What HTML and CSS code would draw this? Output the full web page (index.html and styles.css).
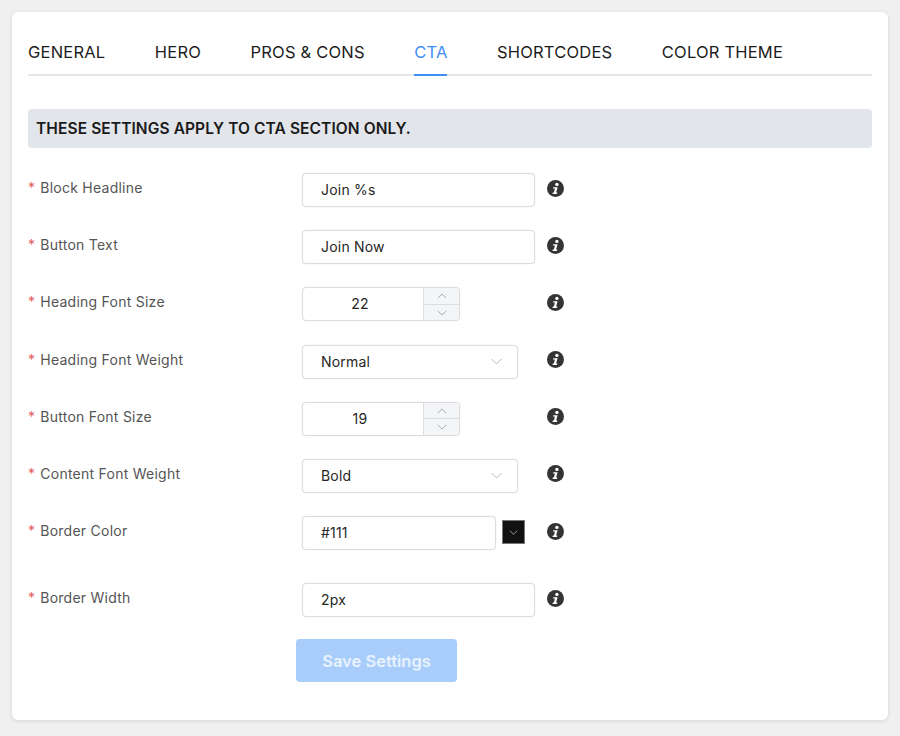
FILE: index.html
```html
<!DOCTYPE html>
<html>
<head>
  <title>CTA Settings</title>
  <meta charset="UTF-8">
  <link rel="stylesheet" href="styles.css">
</head>
<body>
  <svg class="defs" width="0" height="0">
    <symbol id="info" viewBox="0 0 17 17">
      <circle cx="8.5" cy="8.5" r="8.5" fill="#343434"/>
      <circle cx="9.9" cy="4.4" r="1.7" fill="#fff"/>
      <path d="M6.3 7.2h4.3l-1.5 5.4h1.2l-.3 1.4H5.5l.3-1.4h1.1l1-4h-1.9z" fill="#fff"/>
    </symbol>
    <symbol id="down" viewBox="0 0 12 7">
      <path d="M1 1l5 5 5-5" fill="none" stroke="currentColor" stroke-width="1"/>
    </symbol>
    <symbol id="up" viewBox="0 0 12 7">
      <path d="M1 6l5-5 5 5" fill="none" stroke="currentColor" stroke-width="1"/>
    </symbol>
  </svg>

  <div class="card">
    <div class="tabs">
      <a class="tab">General</a>
      <a class="tab">Hero</a>
      <a class="tab">Pros &amp; Cons</a>
      <a class="tab active">CTA</a>
      <a class="tab">Shortcodes</a>
      <a class="tab">Color Theme</a>
    </div>

    <div class="notice">These settings apply to CTA section only.</div>

    <div class="row">
      <label class="label">Block Headline</label>
      <div class="field wide">Join %s</div>
      <svg class="info"><use href="#info"/></svg>
    </div>

    <div class="row">
      <label class="label">Button Text</label>
      <div class="field wide">Join Now</div>
      <svg class="info"><use href="#info"/></svg>
    </div>

    <div class="row">
      <label class="label">Heading Font Size</label>
      <div class="number">
        <div class="number-value">22</div>
        <div class="stepper">
          <span><svg class="step-icon"><use href="#up"/></svg></span>
          <span><svg class="step-icon"><use href="#down"/></svg></span>
        </div>
      </div>
      <svg class="info"><use href="#info"/></svg>
    </div>

    <div class="row">
      <label class="label">Heading Font Weight</label>
      <div class="field select">Normal<svg class="select-icon"><use href="#down"/></svg></div>
      <svg class="info"><use href="#info"/></svg>
    </div>

    <div class="row">
      <label class="label">Button Font Size</label>
      <div class="number">
        <div class="number-value">19</div>
        <div class="stepper">
          <span><svg class="step-icon"><use href="#up"/></svg></span>
          <span><svg class="step-icon"><use href="#down"/></svg></span>
        </div>
      </div>
      <svg class="info"><use href="#info"/></svg>
    </div>

    <div class="row">
      <label class="label">Content Font Weight</label>
      <div class="field select">Bold<svg class="select-icon"><use href="#down"/></svg></div>
      <svg class="info"><use href="#info"/></svg>
    </div>

    <div class="row color-row">
      <label class="label">Border Color</label>
      <div class="field color">#111</div>
      <div class="swatch"><svg class="swatch-icon"><use href="#down"/></svg></div>
      <svg class="info"><use href="#info"/></svg>
    </div>

    <div class="row">
      <label class="label">Border Width</label>
      <div class="field wide">2px</div>
      <svg class="info"><use href="#info"/></svg>
    </div>

    <div class="actions">
      <button class="save">Save Settings</button>
    </div>
  </div>
</body>
</html>
```

FILE: styles.css
```css
html, body {
  height: 100%;
}
body {
  margin: 0;
  padding: 12px;
  box-sizing: border-box;
  height: 736px;
  overflow: hidden;
  background: #f0f0f0;
  color: #1b1b1b;
  font-family: Inter, "Noto Sans", sans-serif;
  font-size: 14px;
}
.defs {
  position: absolute;
}
.card {
  height: 708px;
  box-sizing: border-box;
  padding: 21px 16px 0;
  background: #fff;
  border-radius: 6px;
  box-shadow: 0 1px 4px rgba(0, 0, 0, 0.12);
}
.tabs {
  display: flex;
  gap: 49.5px;
  height: 41px;
  border-bottom: 2px solid #e4e7ec;
}
.tab {
  height: 41px;
  line-height: 39px;
  font-size: 16.5px;
  letter-spacing: 0.2px;
  text-transform: uppercase;
  color: #1c1c1c;
}
.tab.active {
  color: #3e8ef7;
  border-bottom: 2px solid #3e8ef7;
}
.notice {
  margin-top: 33px;
  height: 39px;
  line-height: 39px;
  padding-left: 8px;
  background: #e2e5ea;
  border-radius: 4px;
  font-size: 15.5px;
  font-weight: 600;
  letter-spacing: 0.1px;
  text-transform: uppercase;
  color: #1a1a1a;
}
.row {
  display: flex;
  align-items: center;
  height: 34px;
  margin-top: 23.2px;
}
.notice + .row {
  margin-top: 25px;
}
.color-row {
  margin-bottom: 33px;
}
.label {
  width: 274px;
  flex: none;
  margin-top: -5px;
  color: #555;
  letter-spacing: 0.25px;
}
.label::before {
  content: "*";
  color: #e35d5d;
  margin-right: 5px;
}
.field {
  box-sizing: border-box;
  height: 34px;
  line-height: 32px;
  padding-left: 18px;
  border: 1px solid #dcdcdc;
  border-radius: 4px;
  box-shadow: 0 0 1px rgba(0, 0, 0, 0.2);
  letter-spacing: 0.2px;
  color: #262626;
}
.wide {
  width: 233px;
  margin-right: 12px;
}
.select {
  display: flex;
  justify-content: space-between;
  align-items: center;
  width: 216px;
  margin-right: 29px;
  padding-right: 14px;
}
.select-icon {
  width: 13px;
  height: 7px;
  color: #b5b8bd;
}
.color {
  width: 194px;
  margin-right: 6px;
}
.swatch {
  display: flex;
  align-items: center;
  justify-content: center;
  box-sizing: border-box;
  width: 23px;
  height: 24px;
  margin-right: 22px;
  margin-top: -2px;
  background: #111;
  border: 1px solid #777;
}
.swatch-icon {
  width: 9px;
  height: 5px;
  color: #ccc;
}
.number {
  display: flex;
  box-sizing: border-box;
  width: 158px;
  height: 34px;
  margin-right: 87px;
  border: 1px solid #dcdcdc;
  border-radius: 4px;
  box-shadow: 0 0 1px rgba(0, 0, 0, 0.2);
  overflow: hidden;
}
.number-value {
  flex: 1;
  padding-right: 6px;
  line-height: 32px;
  text-align: center;
  letter-spacing: 0.2px;
  color: #262626;
}
.stepper {
  display: flex;
  flex-direction: column;
  width: 35px;
  background: #f4f5f8;
  border-left: 1px solid #dedede;
}
.stepper span {
  flex: 1;
  display: flex;
  align-items: center;
  justify-content: center;
}
.stepper span + span {
  border-top: 1px solid #dedede;
}
.step-icon {
  width: 10px;
  height: 6px;
  color: #9a9da3;
}
.info {
  width: 17px;
  height: 17px;
  flex: none;
  margin-top: -4px;
}
.actions {
  margin-top: 22px;
  padding-left: 268px;
}
.save {
  width: 161px;
  height: 43px;
  padding: 0;
  background: #a8cdfb;
  border: 0;
  border-radius: 4px;
  color: #e9f2fe;
  font-family: Inter, "Noto Sans", sans-serif;
  font-size: 16.5px;
  font-weight: 600;
}
```
